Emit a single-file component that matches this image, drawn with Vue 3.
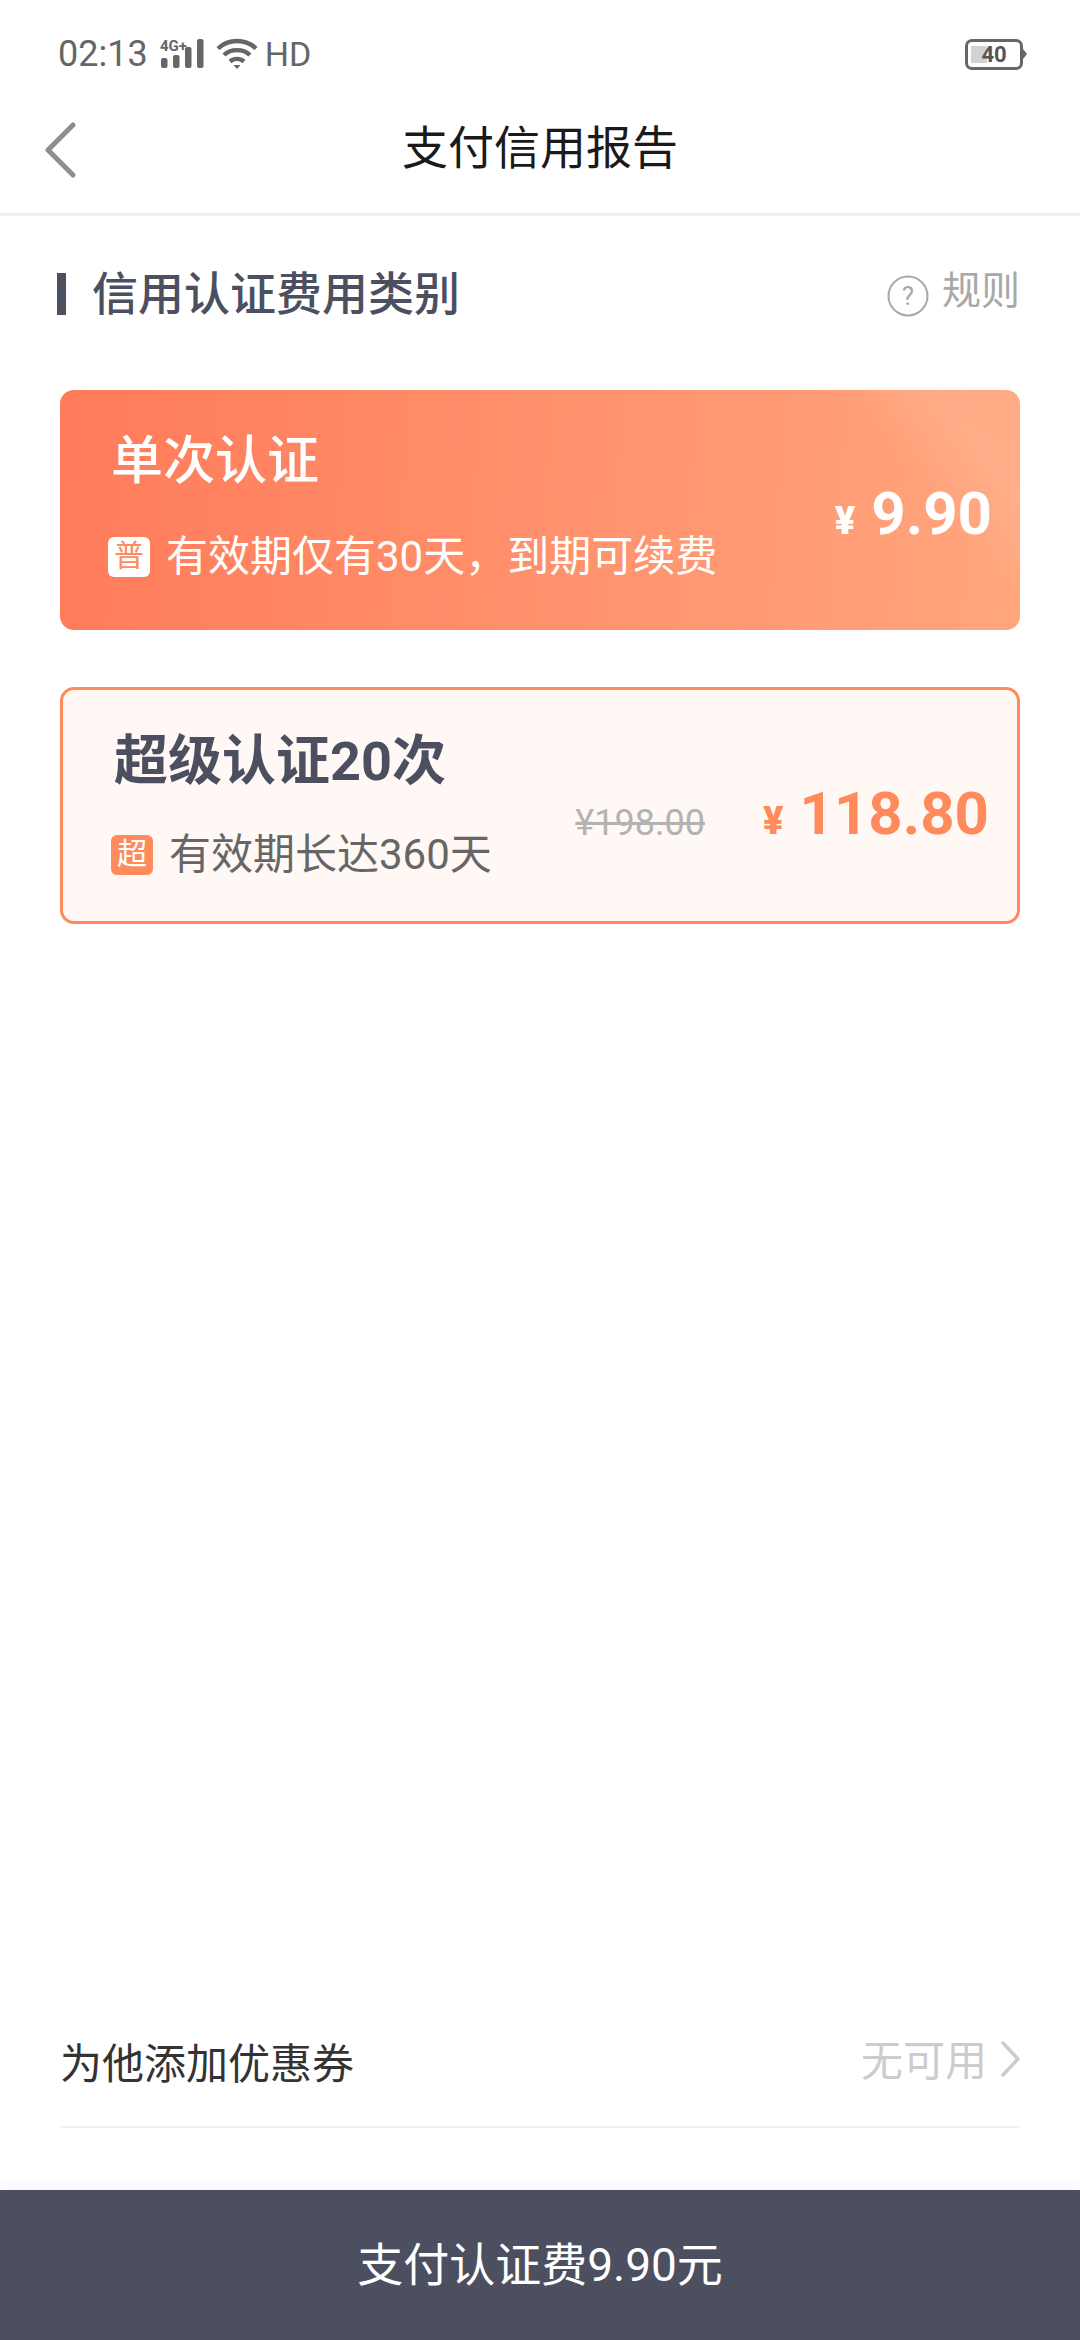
<template>
  <div class="page">
    <div class="statusBar">
      <div class="statusBar__left">
        <span class="statusBar__time">{{ status.time }}</span>
        <svg class="signal" width="44" height="36" viewBox="0 0 44 36">
          <text x="0" y="15" class="signal__label">4G+</text>
          <rect x="1" y="22" width="6.500" height="10" rx="2" />
          <rect x="13" y="19" width="6.500" height="13" rx="2" />
          <rect x="25" y="11" width="6.500" height="21" rx="2" />
          <rect x="37" y="3" width="6.500" height="29" rx="2" />
        </svg>
        <svg class="wifi" width="42" height="34" viewBox="0 0 42 34" fill="none" stroke="#666" stroke-width="4.400">
          <path d="M2 11.500C12.500 1.500 29.500 1.500 40 11.500" />
          <path d="M8 18C15 11.500 27 11.500 34 18" />
          <path d="M14 24.500C18 21 24 21 28 24.500" />
          <path d="M17.500 28H24.500L21 32Z" fill="#666" stroke="none" />
        </svg>
        <span>HD</span>
      </div>
      <div class="battery">
        <span class="battery__fill"></span>
        <span class="battery__num">{{ status.battery }}</span>
      </div>
    </div>

    <header class="nav">
      <svg class="nav__back" width="32" height="56" viewBox="0 0 32 56" fill="none">
        <path d="M29 3L4 28L29 53" stroke="#8e8e8e" stroke-width="5" stroke-linecap="round" stroke-linejoin="round" />
      </svg>
      <h1 class="nav__title">支付信用报告</h1>
    </header>

    <main class="content">
      <div class="sectionHead">
        <h2 class="sectionHead__title">信用认证费用类别</h2>
        <div class="rule">
          <svg width="42" height="42" viewBox="0 0 42 42" fill="none">
            <circle cx="21" cy="21" r="19.500" stroke="#a8a8a8" stroke-width="2" />
            <text x="21" y="30" text-anchor="middle" class="rule__mark">?</text>
          </svg>
          <span class="rule__text">规则</span>
        </div>
      </div>

      <div v-for="plan in plans" :key="plan.title" class="plan" :class="plan.kind">
        <div class="plan__info">
          <div class="plan__title">{{ plan.title }}</div>
          <div class="plan__desc">
            <span class="plan__badge">{{ plan.badge }}</span>
            <span>{{ plan.desc }}</span>
          </div>
        </div>
        <span v-if="plan.oldPrice" class="plan__old">{{ plan.oldPrice }}</span>
        <div class="plan__price">
          <span class="plan__yen">¥</span>{{ plan.price }}
        </div>
      </div>
    </main>

    <div class="coupon">
      <span class="coupon__label">为他添加优惠券</span>
      <span class="coupon__value">无可用</span>
      <svg class="coupon__arrow" width="20" height="36" viewBox="0 0 20 36" fill="none">
        <path d="M3 2L18 18L3 34" stroke="#ccc" stroke-width="3.500" stroke-linecap="round" stroke-linejoin="round" />
      </svg>
    </div>

    <button class="payBtn">支付认证费9.90元</button>
  </div>
</template>

<script setup>
const status = { time: '02:13', battery: 40 };

const plans = [
  { kind: 'plan--single', title: '单次认证', badge: '普', desc: '有效期仅有30天\uFF0C到期可续费', price: '9.90' },
  { kind: 'plan--super', title: '超级认证20次', badge: '超', desc: '有效期长达360天', oldPrice: '¥198.00', price: '118.80' }
];
</script>

<style>
html, body {
  margin: 0;
  background: #fff;
}
</style>

<style scoped>
.page {
  display: flex;
  flex-direction: column;
  width: 1080px;
  height: 2340px;
  overflow: hidden;
  background: #fff;
  font-family: Roboto, "Noto Sans CJK SC", sans-serif;
}

.statusBar {
  display: flex;
  align-items: center;
  justify-content: space-between;
  height: 38px;
  padding: 35px 57px 12px 58px;
  color: #666;
  font-size: 34px;
  line-height: 38px;
}
.statusBar__left {
  display: flex;
  align-items: center;
}
.statusBar__time {
  font-size: 36px;
}
.signal {
  margin: 0 12px 0 12px;
  fill: #666;
}
.signal__label {
  font-size: 15px;
  font-weight: 700;
}
.wifi {
  margin-right: 7px;
}
.battery {
  position: relative;
  box-sizing: border-box;
  width: 58px;
  height: 31px;
  border: 3px solid #666;
  border-radius: 7px;
}
.battery::after {
  content: "";
  position: absolute;
  top: 7px;
  right: -7px;
  border-left: 4px solid #666;
  border-top: 5px solid transparent;
  border-bottom: 5px solid transparent;
}
.battery__fill {
  position: absolute;
  top: 4px;
  bottom: 4px;
  left: 3px;
  width: 16px;
  background: #d2d2d2;
}
.battery__num {
  position: absolute;
  inset: 0;
  text-align: center;
  font-size: 22px;
  line-height: 25px;
  font-weight: 700;
  color: #555;
}

.nav {
  position: relative;
  height: 128px;
  border-bottom: 3px solid #efefef;
}
.nav__back {
  position: absolute;
  left: 44px;
  top: 37px;
}
.nav__title {
  margin: 0;
  text-align: center;
  font-size: 46px;
  font-weight: 400;
  line-height: 64px;
  padding-top: 31px;
  color: #1a1a1a;
}

.content {
  flex: 1;
  padding: 0 60px;
}
.sectionHead {
  display: flex;
  align-items: center;
  justify-content: space-between;
  height: 108px;
  margin: 0 0 66px;
  padding-top: 48px;
  box-sizing: border-box;
}
.sectionHead__title {
  margin: 0 0 0 -3px;
  padding-left: 26px;
  border-left: 9px solid #4c4f5f;
  height: 42px;
  font-size: 46px;
  font-weight: 500;
  line-height: 42px;
  color: #4c4f5f;
}
.rule {
  display: flex;
  align-items: flex-start;
  gap: 13px;
  color: #a8a8a8;
}
.rule svg {
  margin-top: 3px;
}
.rule__mark {
  font-size: 26px;
  fill: #a8a8a8;
}
.rule__text {
  font-size: 39px;
  line-height: 38px;
}

.plan {
  display: flex;
  align-items: flex-start;
  box-sizing: border-box;
  height: 240px;
  margin-bottom: 57px;
  border-radius: 14px;
}
.plan--single {
  padding: 43px 28px 0 48px;
  color: #fff;
  background:
    linear-gradient(50deg, transparent 84%, rgba(255, 255, 255, 0.1) 92%, rgba(255, 255, 255, 0.06) 100%),
    linear-gradient(95deg, #ff7b5a 0%, #ffa67d 100%);
}
.plan--super {
  height: 237px;
  padding: 43px 28px 0 48px;
  border: 3px solid #ff8a5c;
  background: #fff8f4;
}
.plan__info {
  flex: 1;
}
.plan__title {
  margin-left: 3px;
  font-size: 52px;
  font-weight: 500;
  line-height: 58px;
}
.plan--super .plan__title {
  font-size: 54px;
  font-weight: 700;
  color: #4c4f5f;
}
.plan__desc {
  display: flex;
  align-items: center;
  gap: 16px;
  margin-top: 38px;
  font-size: 42px;
  line-height: 56px;
}
.plan--super .plan__desc {
  margin-top: 36px;
  color: #666;
}
.plan__badge {
  width: 42px;
  height: 40px;
  border-radius: 6px;
  text-align: center;
  font-size: 30px;
  line-height: 38px;
  background: #fff;
  color: #ff8a5c;
}
.plan--super .plan__badge {
  background: #ff8a5c;
  color: #fff;
}
.plan__old {
  margin: 70px 58px 0 0;
  font-size: 36px;
  line-height: 40px;
  color: #b3b3b3;
  text-decoration: line-through;
}
.plan__price {
  margin-top: 46px;
  font-size: 60px;
  font-weight: 700;
  line-height: 70px;
}
.plan--super .plan__price {
  color: #ff8a5c;
}
.plan__yen {
  margin-right: 16px;
  font-size: 38px;
  font-weight: 900;
}

.coupon {
  display: flex;
  align-items: center;
  height: 132px;
  margin: 0 60px 62px;
  border-bottom: 2px solid #f2f2f2;
}
.coupon__label {
  flex: 1;
  font-size: 42px;
  color: #333;
}
.coupon__value {
  margin: 0 13px 6px 0;
  font-size: 42px;
  color: #ccc;
}
.coupon__arrow {
  margin-bottom: 2px;
}
.payBtn {
  height: 150px;
  border: 0;
  padding: 0 0 9px;
  background: #4c4f5f;
  color: #fff;
  font: inherit;
  font-size: 46px;
  box-shadow: 0 -6px 10px rgba(0, 0, 0, 0.03);
}
</style>
